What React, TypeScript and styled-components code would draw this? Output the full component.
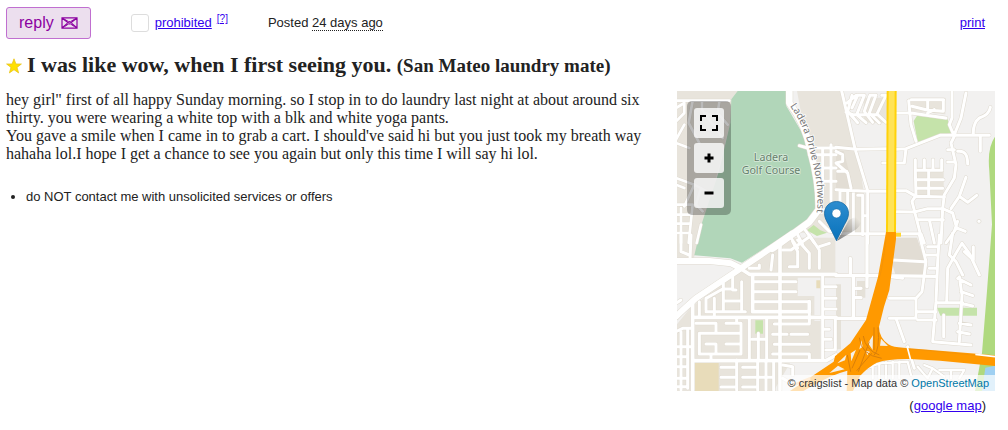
import React from "react";
import styled, { createGlobalStyle } from "styled-components";

const sans = `"Liberation Sans", Arial, sans-serif`;
const serif = `"Liberation Serif", "Times New Roman", serif`;

const GlobalStyle = createGlobalStyle`
  * { box-sizing: border-box; }
  body {
    margin: 0;
    background: #fff;
    color: #222;
    font: 13px/18px ${sans};
  }
`;

const Page = styled.main`
  padding: 7px 13px 12px 6px;
`;

const Toolbar = styled.header`
  display: flex;
  align-items: center;
  height: 32px;
`;

const ReplyButton = styled.button`
  display: flex;
  align-items: center;
  gap: 7px;
  height: 32px;
  padding: 0 12px;
  border: 1px solid #c06fd0;
  border-radius: 3px;
  background: #ecdfee;
  color: #8b00a0;
  font: 16px/18px ${sans};
  cursor: pointer;
`;

const Flag = styled.div`
  display: flex;
  align-items: center;
  gap: 6px;
  margin-left: 40px;
`;

const FlagBox = styled.input`
  appearance: none;
  width: 18px;
  height: 18px;
  margin: 0;
  border: 1px solid #ddd;
  border-radius: 3px;
  background: #fff;
`;

const Link = styled.a`
  color: #3300ee;
  text-decoration: underline;
`;

const HelpLink = styled(Link)`
  align-self: flex-start;
  margin-left: -1px;
  font-size: 10px;
  line-height: 10px;
`;

const Posted = styled.p`
  margin: 0 0 0 40px;
`;

const Age = styled.time`
  border-bottom: 1px dotted #222;
`;

const PrintLink = styled(Link)`
  margin: 0 10px 0 auto;
`;

const Title = styled.h2`
  display: flex;
  align-items: center;
  gap: 5px;
  margin: 13px 0 12px;
  font: bold 22px/26px ${serif};
`;

const Place = styled.small`
  font-size: 19px;
`;

const Content = styled.div`
  display: flex;
  align-items: flex-start;
  gap: 24px;
`;

const Post = styled.section`
  flex: 1;
  min-width: 0;
`;

const Message = styled.p`
  margin: 0;
  font: 16px/18px ${serif};
`;

const Notices = styled.ul`
  margin: 25px 0 0;
  padding-left: 20px;
`;

const MapColumn = styled.aside`
  flex: 0 0 318px;
`;

const MapFrame = styled.div`
  position: relative;
  height: 300px;
  overflow: hidden;
  background: #f2f1f0;
`;

const MapControls = styled.div`
  position: absolute;
  top: 10px;
  left: 10px;
  display: grid;
  gap: 5px;
  padding: 7px;
  border-radius: 5px;
  background: rgba(0, 0, 0, 0.27);
`;

const MapButton = styled.button`
  display: grid;
  place-items: center;
  width: 30px;
  height: 30px;
  padding: 0;
  border: 0;
  border-radius: 3px;
  background: rgba(248, 248, 248, 0.85);
  cursor: pointer;
`;

const Pin = styled.svg`
  position: absolute;
  top: 110px;
  left: 147px;
`;

const Attribution = styled.div`
  position: absolute;
  right: 0;
  bottom: 0;
  padding: 0 6px;
  background: rgba(255, 255, 255, 0.7);
  color: #333;
  font-size: 11px;
  line-height: 16px;
`;

const OsmLink = styled.a`
  color: #0078a8;
  text-decoration: none;
`;

const MapFooter = styled.p`
  margin: 6px 9px 0 0;
  text-align: right;
`;

// Each sheet holds the streets of one quarter of the map, offset by (x, y).
const sheets = [
  {
    x: -3,
    y: -9,
    roads: [
      { w: 7, d: "M0 38H160M0 60L25 45V75L0 100M50 38L38 105L70 165M0 165L40 180M25 110L0 155M78 40V65L140 150M130 40L125 75L155 110M85 75L125 85M0 270L55 290L25 355M0 290L25 300M55 290L110 320M0 350H50L38 465M75 300L60 350M15 360V465M0 380H45M0 407H42M0 435H40M75 410L62 465M60 350L80 370" },
      { w: 19, d: "M340 0V45Q390 110 405 195Q430 285 428 365L400 402L290 482" },
      { w: 8, d: "M370 173L395 180H480M400 200H480M415 240H480M430 280H480M440 185V320M465 170V340M430 370L480 355M430 400L460 430L480 432M380 415L415 465M360 430L380 470M345 450L365 480" },
    ],
  },
  {
    x: 477,
    y: -9,
    roads: [
      { w: 8, d: "M0 178L60 184L155 182M15 0L57 182L95 308V465M0 305L95 310H155M0 437H155M33 45L60 22M30 72L50 80H125L150 103M48 22L35 70L65 104M65 22L48 60M85 22L62 80L90 104M85 22H65M102 22L85 70L110 103M120 22L100 75L130 105M120 22H102M150 22L122 80M150 22H137M0 190L20 200V220L0 225L35 255L45 300M5 250H32M12 310V350M35 310V370M52 310V432M65 322H80V440M80 383H95" },
      { w: 8, d: "M180 75H225L330 90M180 184L210 182L312 142H460M210 182L205 225H140M218 38L225 110L240 160M225 35H323M228 55L270 65L320 70M275 35V65M322 35V70M295 65L275 75M348 9V90L340 110L355 145M390 15L375 90L355 140M463 58Q460 80 430 90Q410 105 412 142M433 145V190M355 145L345 165L360 230L355 270L325 320L320 362M365 190Q395 185 395 228M335 185H355M335 222H358" },
      { w: 8, d: "M238 215V250L240 325M265 215V245M291 215V245M317 215V245M240 247H318M278 248V325M240 275H322M240 301H320M182 308H210L240 325L325 327M238 325L228 340L260 465M182 371L235 372L275 362H320L350 375L362 420L388 430M245 395L322 395M320 362L315 465M280 395L295 465M390 268L370 325L345 362M370 325L395 343L422 322M362 420L330 465M365 400L355 430M180 437H255L265 465" },
    ],
  },
  {
    x: -3,
    y: 432,
    roads: [
      { w: 17, d: "M0 78H100L165 85L195 100M350 -5L195 100L60 190Q20 225 0 245" },
      { w: 10, d: "M190 98L220 118H480M230 118V230H400V200M312 30V465M57 247H480M50 200V465M50 377H450L480 360" },
      { w: 8, d: "M15 0V50L40 60M45 0L42 75M220 100H250V90M290 60L285 105M350 20L365 50V95H340M365 15L400 55V100M400 0L430 45V100M320 45H345L400 5M430 35L460 25M230 140H360M230 170H360M230 200H400M170 120V165H180M142 145V225M197 140V225M145 198H195M90 230H208M70 200V245M90 225V190L140 162H170M115 190V245M400 200V250M60 265H120V295M72 295H195M70 295V357H195V265H150M182 250V265M150 327H195M90 327H120V357M105 360V375M220 250V375M272 250V375M247 295V375M228 313H268" },
      { w: 8, d: "M295 267H400V250M290 298H333M345 298H395M295 328H400M290 357H400V375M440 120V375M440 155H480M440 190H480M440 222H480M440 283H460M440 313H465M478 250V345H450M182 375V465M135 397H180M135 427H180M135 456H180M200 397H245M200 427H245M200 456H245M245 380V465M270 380V465M245 427H290M293 380V465M320 390L350 395V420M320 430L345 445M0 290L20 280H50M15 290V465M35 280V460M0 335H50M0 365H30M0 395H30M0 430H30M0 455H30M0 205L15 195" },
    ],
  },
  {
    x: 477,
    y: 432,
    roads: [
      { w: 9, d: "M0 122H130L300 124M93 0V155M43 70V122M52 122V250M0 250H95M58 160H75M58 188H75" },
      { w: 8, d: "M170 75L265 80M165 125L200 130M160 190H240L258 170L270 80L250 0M240 190V250H160M180 250L205 320M215 335L235 400M310 0L305 80L300 200L290 320L405 330M275 35H305M270 60H300M280 100H300M245 230H300M245 255H300M300 203H380M323 240V305M378 25L360 55L335 100L332 200M378 25L400 55L430 120M412 35V75L385 50M370 125L378 180L370 320M365 130L405 150M375 170L410 182M375 205L410 213M370 265L405 270M365 290L400 297M350 -5L340 60L360 80L380 120" },
      { w: 6, d: "M90 400L130 385L215 380L225 420M110 385V430M130 385V430M150 382V430M170 380V430M190 380V430M245 395L275 430L290 400L325 425M290 400L265 390M310 405H385L370 430M345 405V430" },
    ],
  },
];

function Streets({ casing }: { casing?: boolean }) {
  return (
    <g fill="none" stroke={casing ? "#dfdad0" : "#fff"} strokeLinecap="round" strokeLinejoin="round">
      {sheets.map((sheet) => (
        <g key={`${sheet.x},${sheet.y}`} transform={`translate(${sheet.x} ${sheet.y})`}>
          {sheet.roads.map((road) => (
            <path key={road.d} d={road.d} strokeWidth={road.w + (casing ? 4 : 1)} />
          ))}
        </g>
      ))}
    </g>
  );
}

function Freeway() {
  return (
    <g transform="translate(399 627)">
      <path
        d="M228 -204H258V-182L238 -30L222 20L207 80Q207 112 235 133Q250 143 280 143L555 166V198L390 182L300 177Q235 176 200 188Q172 203 150 228L128 275H110L112 212Q60 225 0 262L-20 273H-60L71 185L75 169L121 130L168 60L204 -70Z"
        fill="#f90"
      />
      <path
        d="M82 190L109 164L105 181ZM122 160L138 149L124 184ZM174 129L189 106L188 150ZM167 152L180 155L172 166ZM213 116L234 138L210 137ZM154 121L158 140L148 148ZM104 208L58 219L84 197Z"
        fill="#f5f0e8"
      />
      <path
        d="M148 113Q152 165 215 175M160 108Q166 150 208 165M192 82V150M204 82Q210 150 192 166M150 150L126 205M178 125L145 215M112 165L122 215M185 160L140 212"
        fill="none"
        stroke="#d97f0a"
        strokeWidth="3"
      />
      <path d="M228 -182Q215 -80 207 -65M260 146L330 149L555 172" fill="none" stroke="#e08a14" />
      <path d="M292 142L302 180M496 163L555 170" stroke="#fff" strokeWidth="5" />
    </g>
  );
}

function MapTiles() {
  return (
    <svg width="100%" height="300" viewBox="0 0 954 900" preserveAspectRatio="xMidYMid slice" aria-hidden="true">
      <rect width="954" height="900" fill="#f2f1f0" />
      <g fill="#e8e4dc">
        <path d="M0 0H185L60 480L50 500H0ZM360 0H495L540 175L560 300V425H290L380 390L425 350Z" />
        <path d="M40 650L330 440H475V560H362V615H412V690H430V805L340 815L290 900H0V700Z" />
        <path d="M700 20H805V70L700 60ZM560 20H630V95H560ZM712 230H800V320H712Z" />
      </g>
      <path d="M477 180H500L530 295H477ZM650 440H720L740 500V550H655L640 500Z" fill="#e2ddd4" />
      <path d="M477 580H492V775H477ZM540 570H565V620H540Z" fill="#e5e1d8" />
      <path d="M182 0H328V45L390 150L405 190L422 290L418 355L380 398L195 515L160 502L52 493L75 395L126 240L160 95L163 25Z" fill="#b1d6b9" />
      <path d="M710 90L720 74L812 85L822 127L790 133L722 153ZM390 418L410 402L430 418L450 425L420 435Z" fill="#c5e3aa" />
      <path d="M235 688H258V728H235ZM780 650H900V674H790Z" fill="#c5e3aa" />
      <path d="M954 137Q930 170 937 240L945 400L930 600L915 785L894 900H954Z" fill="#afd97e" />
      <path d="M954 824L925 830L915 900H954Z" fill="#9fd0f2" />
      <path d="M53 815H125V900H53ZM418 568H430V592H418Z" fill="#e8dcba" />
      <Streets casing />
      <Streets />
      <circle cx="906" cy="391" r="6" fill="#fff" stroke="#ddd8cd" strokeWidth="2" />
      <path d="M644 0L642 426" stroke="#ffd20a" strokeWidth="30" />
      <path d="M644 0L642 426" stroke="#ffe357" strokeWidth="18" />
      <path d="M656 431H672" stroke="#ffd633" strokeWidth="12" />
      <Freeway />
      <path d="M340 886L400 862" stroke="#ffc780" strokeWidth="8" />
      <g fontFamily='"Noto Sans", sans-serif' fill="#65806c" stroke="#d8eadb" strokeWidth="5" paintOrder="stroke" strokeLinejoin="round">
        <text x="282" y="210" fontSize="32" textAnchor="middle">Ladera</text>
        <text x="282" y="250" fontSize="32" textAnchor="middle">Golf Course</text>
      </g>
      <path id="ladera-drive" d="M339 45Q388 115 400 190Q430 290 418 374" fill="none" />
      <text fontFamily='"Noto Sans", sans-serif' fontSize="30" fill="#777" stroke="#fff" strokeWidth="5" paintOrder="stroke">
        <textPath href="#ladera-drive">Ladera Drive Northwest</textPath>
      </text>
    </svg>
  );
}

function MarkerPin() {
  return (
    <Pin width="46" height="41" viewBox="0 0 46 41" role="img" aria-label="Post location">
      <defs>
        <linearGradient id="pin" x2="0" y2="1">
          <stop stopColor="#2e8dcf" />
          <stop offset="1" stopColor="#0872bb" />
        </linearGradient>
        <linearGradient id="shade" x1="0" y1="1" x2="1" y2="0">
          <stop stopOpacity=".5" />
          <stop offset=".9" stopOpacity="0" />
        </linearGradient>
      </defs>
      <path d="M13 40L25 19Q32 14 37 18Q38 26 28 31Z" fill="url(#shade)" />
      <path d="M12.5.5C5.5.5.5 5.8.5 12.4c0 4.2 2 7.4 4.2 11.4l7.8 15.9 7.8-15.9c2.2-4 4.2-7.2 4.2-11.4C24.5 5.8 19.5.5 12.5.5Z" fill="url(#pin)" stroke="#1768a3" strokeWidth=".8" />
      <circle cx="12.5" cy="12.4" r="4.5" fill="#fff" stroke="#1768a3" strokeWidth=".5" />
    </Pin>
  );
}

export default function App() {
  return (
    <>
      <GlobalStyle />
      <Page>
        <Toolbar>
          <ReplyButton type="button">
            reply
            <svg width="17" height="12" viewBox="0 0 17 12" fill="none" stroke="currentColor" aria-hidden="true">
              <path d="M1 .8H16V11.2H1ZM1 1L6.5 5.3Q8.5 6.7 10.5 5.3L16 1M1 11L6.5 6.2M16 11L10.5 6.2" strokeWidth="1.2" />
              <path d="M3 2L7.5 4.6H9.5L14 2M3.5 9.6L7.5 7H9.5L13.5 9.6" />
            </svg>
          </ReplyButton>
          <Flag>
            <FlagBox type="checkbox" id="flag" aria-labelledby="flag-label" />
            <Link id="flag-label" href="#prohibited">prohibited</Link>
            <HelpLink href="#help">[?]</HelpLink>
          </Flag>
          <Posted>
            Posted <Age>24 days ago</Age>
          </Posted>
          <PrintLink href="#print">print</PrintLink>
        </Toolbar>

        <Title>
          <svg width="16" height="16" viewBox="0 0 16 16" role="img" aria-label="Favorite">
            <path d="M8 .8L9.9 6H15.4L11 9.4L12.6 14.9L8 11.7L3.4 14.9L5 9.4L.6 6H6.1Z" fill="#ffe000" stroke="#e8c520" strokeWidth=".8" />
          </svg>
          <span>
            I was like wow, when I first seeing you. <Place>(San Mateo laundry mate)</Place>
          </span>
        </Title>

        <Content>
          <Post>
            <Message>
              hey girl" first of all happy Sunday morning. so I stop in to do laundry last night at about around six
              thirty. you were wearing a white top with a blk and white yoga pants.
              <br />
              You gave a smile when I came in to grab a cart. I should've said hi but you just took my breath way
              hahaha lol.I hope I get a chance to see you again but only this time I will say hi lol.
            </Message>
            <Notices>
              <li>do NOT contact me with unsolicited services or offers</li>
            </Notices>
          </Post>

          <MapColumn>
            <MapFrame>
              <MapTiles />
              <MarkerPin />
              <MapControls>
                <MapButton type="button" aria-label="Full screen">
                  <svg width="18" height="16" viewBox="0 0 18 16" fill="none" stroke="#000" strokeWidth="2">
                    <path d="M1 6V1H6M12 1H17V6M17 10V15H12M6 15H1V10" />
                  </svg>
                </MapButton>
                <MapButton type="button" aria-label="Zoom in">
                  <svg width="10" height="10" viewBox="0 0 10 10" stroke="#000" strokeWidth="3">
                    <path d="M.5 5H9.5M5 .5V9.5" />
                  </svg>
                </MapButton>
                <MapButton type="button" aria-label="Zoom out">
                  <svg width="10" height="10" viewBox="0 0 10 10" stroke="#000" strokeWidth="3">
                    <path d="M.5 5H9.5" />
                  </svg>
                </MapButton>
              </MapControls>
              <Attribution>
                © craigslist - Map data © <OsmLink href="#osm">OpenStreetMap</OsmLink>
              </Attribution>
            </MapFrame>
            <MapFooter>
              (<Link href="#google-map">google map</Link>)
            </MapFooter>
          </MapColumn>
        </Content>
      </Page>
    </>
  );
}
